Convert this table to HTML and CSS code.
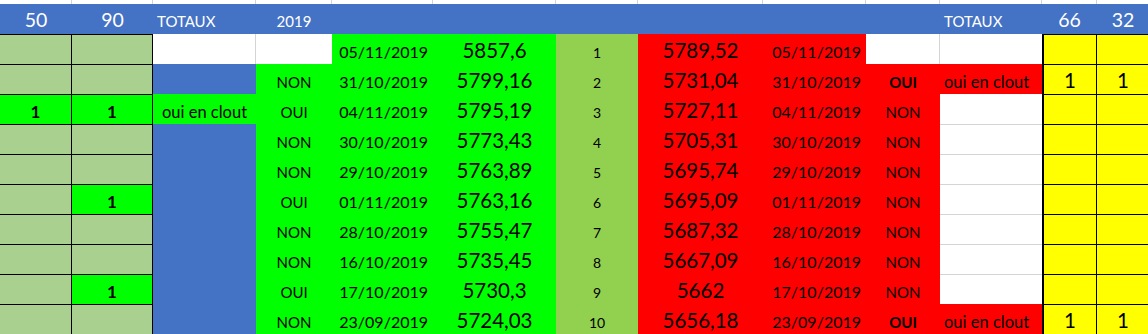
FILE: index.html
```html
<!DOCTYPE html>
<html lang="fr">
<head>
<meta charset="utf-8">
<title>Totaux 2019</title>
<link rel="stylesheet" href="styles.css">
</head>
<body>
<div class="sheet">
  <!-- top strip -->
  <div class="g"></div><div class="g"></div><div class="g"></div><div class="g"></div><div class="g"></div><div class="g"></div><div class="g"></div><div class="g"></div><div class="g"></div><div class="g"></div><div class="g"></div><div class="g"></div><div class="g"></div>

  <!-- header -->
  <div class="c hd hnum">50</div>
  <div class="c hd hnum">90</div>
  <div class="c hd l">TOTAUX</div>
  <div class="c hd">2019</div>
  <div class="c hd"></div><div class="c hd"></div><div class="c hd"></div><div class="c hd"></div><div class="c hd"></div><div class="c hd"></div>
  <div class="c hd l">TOTAUX</div>
  <div class="c hd hnum">66</div>
  <div class="c hd hnum">32</div>

  <!-- row 1 -->
  <div class="c lg bk"></div><div class="c lg bk"></div>
  <div class="c wh gr"></div><div class="c wh"></div>
  <div class="c bg date r">05/11/2019</div><div class="c bg big">5857,6</div><div class="c mg small">1</div>
  <div class="c rd big">5789,52</div><div class="c rd date r">05/11/2019</div>
  <div class="c wh gr"></div><div class="c wh"></div>
  <div class="c ye yl"></div><div class="c ye yr"></div>

  <!-- row 2 -->
  <div class="c lg bk"></div><div class="c lg bk"></div>
  <div class="c bl"></div><div class="c bg">NON</div>
  <div class="c bg date r">31/10/2019</div><div class="c bg big">5799,16</div><div class="c mg small">2</div>
  <div class="c rd big">5731,04</div><div class="c rd date r">31/10/2019</div>
  <div class="c rd b">OUI</div><div class="c rd l txt">oui en clout</div>
  <div class="c ye yl big">1</div><div class="c ye yr big">1</div>

  <!-- row 3 -->
  <div class="c bg bk b one">1</div><div class="c bg bk b one">1</div>
  <div class="c bg txt">oui en clout</div><div class="c bg">OUI</div>
  <div class="c bg date r">04/11/2019</div><div class="c bg big">5795,19</div><div class="c mg small">3</div>
  <div class="c rd big">5727,11</div><div class="c rd date r">04/11/2019</div>
  <div class="c rd">NON</div><div class="c wh"></div>
  <div class="c ye yl"></div><div class="c ye yr"></div>

  <!-- row 4 -->
  <div class="c lg bk"></div><div class="c lg bk"></div>
  <div class="c bl"></div><div class="c bg">NON</div>
  <div class="c bg date r">30/10/2019</div><div class="c bg big">5773,43</div><div class="c mg small">4</div>
  <div class="c rd big">5705,31</div><div class="c rd date r">30/10/2019</div>
  <div class="c rd">NON</div><div class="c wh gt"></div>
  <div class="c ye yl"></div><div class="c ye yr"></div>

  <!-- row 5 -->
  <div class="c lg bk"></div><div class="c lg bk"></div>
  <div class="c bl"></div><div class="c bg">NON</div>
  <div class="c bg date r">29/10/2019</div><div class="c bg big">5763,89</div><div class="c mg small">5</div>
  <div class="c rd big">5695,74</div><div class="c rd date r">29/10/2019</div>
  <div class="c rd">NON</div><div class="c wh gt"></div>
  <div class="c ye yl"></div><div class="c ye yr"></div>

  <!-- row 6 -->
  <div class="c lg bk"></div><div class="c bg bk b one">1</div>
  <div class="c bl"></div><div class="c bg">OUI</div>
  <div class="c bg date r">01/11/2019</div><div class="c bg big">5763,16</div><div class="c mg small">6</div>
  <div class="c rd big">5695,09</div><div class="c rd date r">01/11/2019</div>
  <div class="c rd">NON</div><div class="c wh gt"></div>
  <div class="c ye yl"></div><div class="c ye yr"></div>

  <!-- row 7 -->
  <div class="c lg bk"></div><div class="c lg bk"></div>
  <div class="c bl"></div><div class="c bg">NON</div>
  <div class="c bg date r">28/10/2019</div><div class="c bg big">5755,47</div><div class="c mg small">7</div>
  <div class="c rd big">5687,32</div><div class="c rd date r">28/10/2019</div>
  <div class="c rd">NON</div><div class="c wh gt"></div>
  <div class="c ye yl"></div><div class="c ye yr"></div>

  <!-- row 8 -->
  <div class="c lg bk"></div><div class="c lg bk"></div>
  <div class="c bl"></div><div class="c bg">NON</div>
  <div class="c bg date r">16/10/2019</div><div class="c bg big">5735,45</div><div class="c mg small">8</div>
  <div class="c rd big">5667,09</div><div class="c rd date r">16/10/2019</div>
  <div class="c rd">NON</div><div class="c wh gt"></div>
  <div class="c ye yl"></div><div class="c ye yr"></div>

  <!-- row 9 -->
  <div class="c lg bk"></div><div class="c bg bk b one">1</div>
  <div class="c bl"></div><div class="c bg">OUI</div>
  <div class="c bg date r">17/10/2019</div><div class="c bg big">5730,3</div><div class="c mg small">9</div>
  <div class="c rd big">5662</div><div class="c rd date r">17/10/2019</div>
  <div class="c rd">NON</div><div class="c wh gt"></div>
  <div class="c ye yl"></div><div class="c ye yr"></div>

  <!-- row 10 -->
  <div class="c lg bk"></div><div class="c lg bk"></div>
  <div class="c bl"></div><div class="c bg">NON</div>
  <div class="c bg date r">23/09/2019</div><div class="c bg big">5724,03</div><div class="c mg small">10</div>
  <div class="c rd big">5656,18</div><div class="c rd date r">23/09/2019</div>
  <div class="c rd b">OUI</div><div class="c rd l txt">oui en clout</div>
  <div class="c ye yl big">1</div><div class="c ye yr big">1</div>
</div>
</body>
</html>
```
FILE: styles.css
```css
html, body {
  margin: 0;
  padding: 0;
  background: #ffffff;
  overflow: hidden;
}
.sheet {
  display: grid;
  grid-template-columns: 72px 81px 103px 76px 101px 123px 82px 125px 103px 74px 102px 55px 52px;
  grid-template-rows: 4px 30px repeat(10, 30px);
  width: 1149px;
  font-family: Lato, "Open Sans", "DejaVu Sans", sans-serif;
  color: #000;
}
.g {
  border-right: 1px solid #d4d4d4;
  box-sizing: border-box;
}
.c {
  box-sizing: border-box;
  display: flex;
  align-items: flex-end;
  justify-content: center;
  padding: 0 4px 4px;
  font-size: 15px;
  line-height: 1;
  white-space: nowrap;
  overflow: hidden;
}
.l { justify-content: flex-start; }
.r { justify-content: flex-end; }
.b { font-weight: 700; }
.one { font-size: 17px; }
.txt { font-size: 16.5px; }
.big { font-size: 20.5px; padding-bottom: 4px; }
.date { font-size: 16px; padding-right: 5px; }
.small { font-size: 14px; }

.hd {
  background: #4472c4;
  color: #ffffff;
  padding-bottom: 5px;
}
.hnum { font-size: 19.5px; padding-bottom: 5px; }

.lg { background: #a9d08e; }
.bg { background: #00ff00; }
.mg { background: #92d050; }
.rd { background: #ff0000; }
.bl { background: #4472c4; }
.wh { background: #ffffff; }
.ye { background: #ffff00; }

.bk {
  border-top: 1px solid #000;
  border-right: 1px solid #000;
}
.gr { border-right: 1px solid #d4d4d4; }
.gt { border-top: 1px solid #d4d4d4; }

.yl {
  border-left: 2px solid #000;
  border-right: 1px solid #000;
  border-top: 1px solid #000;
}
.yr {
  border-top: 1px solid #000;
}
```
